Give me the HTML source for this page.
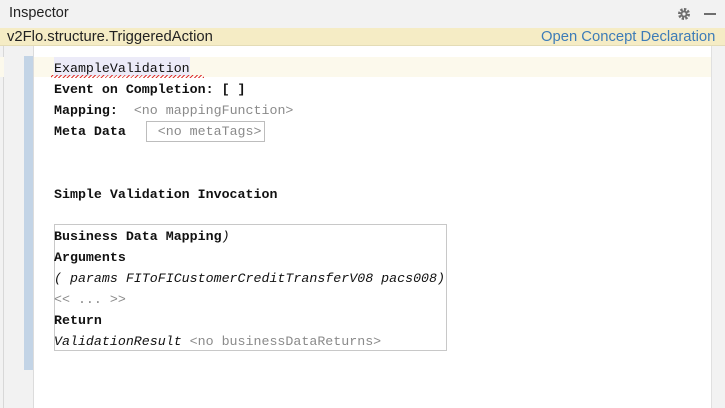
<!DOCTYPE html><html><head><style>
body{margin:0;width:725px;height:408px;overflow:hidden;background:#fff;font-family:"Liberation Sans",sans-serif;position:relative}
.a{position:absolute}
.m{font-family:"Liberation Mono",monospace;font-size:13.3px;white-space:pre;line-height:21px}
b{font-weight:bold}
.g{color:#8a8a8a}
i{font-style:italic}
</style></head><body>
<div class="a" style="left:0;top:0;width:725px;height:28px;background:#f2f2f2;border-bottom:1px solid #d6d6d6"></div>
<div class="a" style="left:9px;top:5px;font-size:14.5px;color:#222">Inspector</div>
<svg class="a" style="left:677px;top:7px" width="14" height="14" viewBox="0 0 14 14"><circle cx="7" cy="7" r="4.5" fill="none" stroke="#6e6e6e" stroke-width="3" stroke-dasharray="2.2 1.3"/><circle cx="7" cy="7" r="3.5" fill="#6e6e6e"/><circle cx="7" cy="7" r="1.6" fill="#f2f2f2"/></svg>
<div class="a" style="left:704px;top:13px;width:12px;height:2px;background:#6e6e6e"></div>
<div class="a" style="left:0;top:28px;width:725px;height:17px;background:#f5ecc5;border-bottom:1px solid #e4dcb6"></div>
<div class="a" style="left:7px;top:28px;font-size:14.8px;color:#222;line-height:18px">v2Flo.structure.TriggeredAction</div>
<div class="a" style="left:541px;top:28px;font-size:14.8px;color:#3d7cb8;line-height:18px">Open Concept Declaration</div>
<div class="a" style="left:0;top:46px;width:33px;height:362px;background:#f2f2f2;border-right:1px solid #dcdcdc"></div>
<div class="a" style="left:3px;top:46px;width:1px;height:362px;background:#d8d8d8"></div>
<div class="a" style="left:34px;top:57px;width:677px;height:20px;background:#fcf9ec"></div>
<div class="a" style="left:0;top:57px;width:4px;height:20px;background:#fcf9ec"></div>
<div class="a" style="left:24px;top:56px;width:9px;height:314px;background:#c3d4e6"></div>
<div class="a" style="left:711px;top:46px;width:14px;height:362px;background:#f2f2f2;border-left:1px solid #e0e0e0"></div>
<div class="a" style="left:54px;top:57px;width:136px;height:19px;background:#ecebf8"></div>
<div class="a" style="left:51px;top:75px;width:153px;height:3px;background:repeating-linear-gradient(135deg,transparent 0 1px,#d33 1px 2px,transparent 2px 3px)"></div>
<div class="a" style="left:146px;top:121px;width:117px;height:19px;border:1px solid #bdbdbd"></div>
<div class="a" style="left:54px;top:224px;width:391px;height:125px;border:1px solid #c8c8c8"></div>
<div class="a m" style="left:54px;top:58px;color:#111">ExampleValidation
<b>Event on Completion: [ ]</b>
<b>Mapping:</b>  <span class="g">&lt;no mappingFunction&gt;</span>
<b>Meta Data</b>    <span class="g">&lt;no metaTags&gt;</span>


<b>Simple Validation Invocation</b>
</div>
<div class="a m" style="left:54px;top:226px;color:#111"><b>Business Data Mapping</b><i>)</i>
<b>Arguments</b>
<i>( params FIToFICustomerCreditTransferV08 pacs008)</i>
<span class="g">&lt;&lt; ... &gt;&gt;</span>
<b>Return</b>
<i>ValidationResult</i> <span class="g">&lt;no businessDataReturns&gt;</span></div>
</body></html>
